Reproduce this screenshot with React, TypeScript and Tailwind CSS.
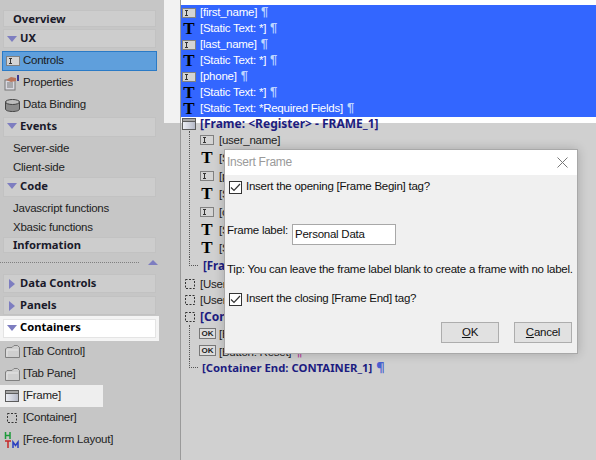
import { ReactNode } from 'react';

const BOLD_FONT = 'font-["Noto_Sans",sans-serif] font-bold';
const BODY_TEXT = 'text-[11.5px] tracking-[-0.25px]';

// Small toolbox glyphs from the builder's tree
const InputIcon = () => (
  <svg width="14" height="10" viewBox="0 0 14 10" className="shrink-0">
    <rect x="0.5" y="0.5" width="13" height="9" fill="#d4d4d4" stroke="#808080" />
    <path d="M3 2.500h3M3 7.500h3M4.500 2.500v5" stroke="#333" fill="none" />
  </svg>
);

const TextIcon = () => (
  <span className='w-[14px] shrink-0 text-center font-["Liberation_Serif",serif] text-[17px] leading-[14px] font-bold tracking-normal text-black'>
    T
  </span>
);

const FrameIcon = () => (
  <svg width="14" height="12" viewBox="0 0 14 12" className="shrink-0">
    <defs>
      <linearGradient id="frame-body" x1="0" x2="1" y1="0" y2="0">
        <stop offset="0" stopColor="#eef0f6" />
        <stop offset="1" stopColor="#b4b8c6" />
      </linearGradient>
    </defs>
    <rect x="0.5" y="0.5" width="13" height="11" fill="url(#frame-body)" stroke="#5c5c5c" />
    <rect x="1" y="1" width="12" height="2" fill="#a6a6a6" />
    <path d="M1 3.500h12" stroke="#5c5c5c" fill="none" />
  </svg>
);

const DashedIcon = () => (
  <svg width="12" height="12" viewBox="0 0 12 12" className="shrink-0">
    <rect x="1.500" y="1.500" width="9" height="9" fill="none" stroke="#333" strokeDasharray="2 1.500" />
  </svg>
);

const FolderIcon = () => (
  <svg width="15" height="13" viewBox="0 0 15 13" className="shrink-0">
    <path d="M.5 12.500V4L2 2.500h5L9 .5h3.500L14.500 2.500v10z" fill="#cfcfcf" stroke="#808080" />
    <path d="M2 11.500V5h11" stroke="#e6e6e6" fill="none" />
  </svg>
);

const HtmIcon = () => (
  <svg width="16" height="16" viewBox="0 0 16 16" className="shrink-0">
    <path d="M1.500 0v7M6 0v7M1.500 3.500H6" stroke="#1d9a3a" strokeWidth="1.500" fill="none" />
    <path d="M1 9h6M4 9v7" stroke="#c62828" strokeWidth="1.500" fill="none" />
    <path d="M9 16v-6l2.500 3.500L14 10v6" stroke="#2a3fc0" strokeWidth="1.500" fill="none" />
  </svg>
);

const OkIcon = () => (
  <span className='flex h-[11px] w-[17px] shrink-0 items-center justify-center border border-[#777] bg-[#dcdcdc] font-["Liberation_Sans",sans-serif] text-[8px] leading-none font-bold tracking-normal text-[#222]'>
    OK
  </span>
);

const PropertiesIcon = () => (
  <svg width="16" height="16" viewBox="0 0 16 16" className="shrink-0">
    <rect x="1" y="5" width="10" height="10" fill="#d8d8e0" stroke="#777" />
    <path d="M3 8h6M3 10h6M3 12h6" stroke="#777" fill="none" />
    <path d="M2 5l5-3 5 1v3l-5 1z" fill="#b9745a" />
    <rect x="13" y="0" width="2" height="6" fill="#3a3a90" />
  </svg>
);

const DatabaseIcon = () => (
  <svg width="15" height="13" viewBox="0 0 15 13" className="shrink-0">
    <path d="M.5 3v7c0 1.500 3 2.500 7 2.500s7-1 7-2.500V3z" fill="#8c8c8c" stroke="#444" />
    <ellipse cx="7.500" cy="3" rx="7" ry="2.500" fill="#bdbdbd" stroke="#444" />
  </svg>
);

const Arrow = ({ open }: { open: boolean }) => (
  <span className="flex w-[10px] shrink-0 justify-center">
    {open ? (
      <svg width="10" height="6" viewBox="0 0 10 6">
        <path d="M0 0h10L5 6z" fill="#7d7dc0" />
      </svg>
    ) : (
      <svg width="6" height="10" viewBox="0 0 6 10">
        <path d="M0 0v10l6-5z" fill="#7d7dc0" />
      </svg>
    )}
  </span>
);

const SectionBar = ({
  label,
  arrow,
  className = '',
}: {
  label: string;
  arrow?: 'open' | 'closed';
  className?: string;
}) => (
  <div
    className={`ml-[3px] flex w-[153px] items-center gap-[3px] border border-[#c2c2c2] bg-[#cdcdcd] pl-[3px] text-[11.2px] text-[#1a1a2a] ${BOLD_FONT} ${className}`}
  >
    {arrow ? <Arrow open={arrow === 'open'} /> : <span className="w-[3px]" />}
    <span>{label}</span>
  </div>
);

const SideItem = ({ icon, label, className = '' }: { icon?: ReactNode; label: string; className?: string }) => (
  <div className={`flex items-center text-[#222] ${BODY_TEXT} ${className}`}>
    {icon ? <span className="flex w-[23px] justify-center pl-[1px]">{icon}</span> : <span className="w-[13px]" />}
    <span>{label}</span>
  </div>
);

const Pilcrow = ({ selected }: { selected?: boolean }) => (
  <span className={`ml-[4px] text-[13px] font-bold ${selected ? 'text-[#bcd4ff]' : 'text-[#4a5fd0]'}`}>¶</span>
);

const SelectedRow = ({ icon, label }: { icon: ReactNode; label: string }) => (
  <div className={`flex h-[16px] items-center gap-[4px] text-white ${BODY_TEXT}`}>
    {icon}
    <span className="pb-[2px]">
      {label}
      <Pilcrow selected />
    </span>
  </div>
);

const TreeRow = ({ icon, label, className = 'h-[18px]' }: { icon: ReactNode; label: ReactNode; className?: string }) => (
  <div className={`flex items-center gap-[5px] text-[#222] ${BODY_TEXT} ${className}`}>
    {icon}
    <span className="pt-[2px]">{label}</span>
  </div>
);

// L shaped dotted corner that closes a nested branch of the tree
const BranchEnd = () => <span className="mb-[9px] h-[9px] w-[9px] shrink-0 border-b border-l border-dotted border-[#555]" />;

const CheckRow = ({ label, className = '' }: { label: string; className?: string }) => (
  <div className={`ml-[2px] flex items-center gap-[4px] ${className}`}>
    <span className="flex h-[13px] w-[13px] items-center justify-center border border-[#333] bg-white">
      <svg width="11" height="9" viewBox="0 0 11 9">
        <path d="M1 4.500l3 3 6-6.500" stroke="#333" strokeWidth="1.200" fill="none" />
      </svg>
    </span>
    <span>{label}</span>
  </div>
);

const InsertFrameDialog = () => (
  <div className={`absolute top-[149px] left-[224px] flex h-[205px] w-[354px] flex-col border border-[#a8a8a8] bg-[#f0f0f0] text-[#111] shadow-[0_0_10px_rgba(0,0,0,0.2)] ${BODY_TEXT}`}>
    <div className="flex h-[25px] shrink-0 items-center justify-between bg-white pr-[9px] pl-[2px] text-[12px] text-[#9a9a9a]">
      <span className="pb-[2px]">Insert Frame</span>
      <svg width="11" height="11" viewBox="0 0 11 11">
        <path d="M.5.5l10 10M10.500.5l-10 10" stroke="#777" fill="none" />
      </svg>
    </div>
    <div className="flex flex-1 flex-col pl-[2px]">
      <CheckRow label="Insert the opening [Frame Begin] tag?" className="mt-[5px] h-[14px]" />
      <div className="mt-[30px] flex h-[21px] items-center">
        <span className="-mt-[7px] w-[65px] whitespace-nowrap">Frame label:</span>
        <div className="flex h-[21px] w-[104px] items-center border border-[#a8a8a8] bg-white pl-[2px]">Personal Data</div>
      </div>
      <div className="mt-[16px] h-[16px] whitespace-nowrap">Tip: You can leave the frame label blank to create a frame with no label.</div>
      <CheckRow label="Insert the closing [Frame End] tag?" className="mt-[15px] h-[14px]" />
      <div className="mt-[16px] flex justify-end gap-[15px] pr-[5px]">
        <button className="h-[21px] w-[58px] border border-[#adadad] bg-[#e1e1e1]">
          <span className="underline">O</span>K
        </button>
        <button className="h-[21px] w-[58px] border border-[#adadad] bg-[#e1e1e1]">
          <span className="underline">C</span>ancel
        </button>
      </div>
    </div>
  </div>
);

export default function App() {
  return (
    <div className='relative flex h-[460px] w-[596px] overflow-hidden bg-[#c8c8c8] font-["Liberation_Sans",sans-serif]'>
      {/* left toolbox */}
      <aside className="relative flex h-full w-[181px] shrink-0 flex-col border-r border-[#9a9a9a] bg-[#c6c6c6] pt-[10px]">
        <div className="absolute top-0 left-[164px] h-[123px] w-[16px] bg-[#f2f2f2]" />
        <SectionBar label="Overview" className="h-[17px] pt-[2px]" />
        <SectionBar label="UX" arrow="open" className="mt-[2px] h-[19px]" />
        <div className={`mt-[3px] ml-[2px] flex h-[20px] w-[155px] items-center border border-[#2a7ac6] bg-[#5f9fdc] text-[#1a1a1a] ${BODY_TEXT}`}>
          <span className="flex w-[20px] justify-center">
            <InputIcon />
          </span>
          <span>Controls</span>
        </div>
        <SideItem icon={<PropertiesIcon />} label="Properties" className="h-[22px] pt-[2px]" />
        <SideItem icon={<DatabaseIcon />} label="Data Binding" className="h-[22px] pt-[2px]" />
        <SectionBar label="Events" arrow="open" className="mt-[2px] h-[20px] pb-[2px]" />
        <SideItem label="Server-side" className="mt-[1px] h-[20px] pt-[2px]" />
        <SideItem label="Client-side" className="h-[19px]" />
        <SectionBar label="Code" arrow="open" className="h-[20px] pb-[2px]" />
        <SideItem label="Javascript functions" className="mt-[1px] h-[20px] pt-[2px]" />
        <SideItem label="Xbasic functions" className="h-[19px]" />
        <SectionBar label="Information" className="h-[16px]" />
        <div className="mt-[5px] flex h-[8px] items-center">
          <div className="h-0 w-[139px] border-t border-dotted border-[#808080]" />
          <svg width="10" height="5" viewBox="0 0 10 5" className="ml-[9px]">
            <path d="M0 5h10L5 0z" fill="#7d7dc0" />
          </svg>
        </div>
        <SectionBar label="Data Controls" arrow="closed" className="mt-[8px] h-[19px]" />
        <SectionBar label="Panels" arrow="closed" className="mt-[3px] h-[19px]" />
        <div className="mt-[1px] flex h-[25px] w-[159px] shrink-0 items-center bg-[#f4f4f4]">
          <SectionBar label="Containers" arrow="open" className="h-[19px] pb-[2px] !border-[#e4e4e4] !bg-white !text-black" />
        </div>
        <SideItem icon={<FolderIcon />} label="[Tab Control]" className="h-[21px]" />
        <SideItem icon={<FolderIcon />} label="[Tab Pane]" className="h-[22px] pt-[2px]" />
        <SideItem icon={<FrameIcon />} label="[Frame]" className="mt-[1px] h-[22px] w-[103px] bg-[#eeeeee]" />
        <SideItem icon={<DashedIcon />} label="[Container]" className="h-[22px]" />
        <SideItem icon={<HtmIcon />} label="[Free-form Layout]" className="h-[22px]" />
      </aside>

      {/* canvas tree */}
      <main className="flex flex-1 flex-col bg-[#d0d0d0]">
        <div className="bg-white pt-[5px]">
          <div className="bg-[#3366ff] pl-[1px]">
            <SelectedRow icon={<InputIcon />} label="[first_name]" />
            <SelectedRow icon={<TextIcon />} label="[Static Text: *]" />
            <SelectedRow icon={<InputIcon />} label="[last_name]" />
            <SelectedRow icon={<TextIcon />} label="[Static Text: *]" />
            <SelectedRow icon={<InputIcon />} label="[phone]" />
            <SelectedRow icon={<TextIcon />} label="[Static Text: *]" />
            <SelectedRow icon={<TextIcon />} label="[Static Text: *Required Fields]" />
          </div>
        </div>
        <div className="flex flex-col pl-[1px]">
          <div className={`-ml-[1px] flex h-[14px] items-center gap-[4px] bg-[linear-gradient(#ffffff,#ffffff_6px,#d0d0d0_6px)] pl-[1px] text-[12px] text-[#1c1c80] ${BOLD_FONT}`}>
            <FrameIcon />
            <span>[Frame: &lt;Register&gt; - FRAME_1]</span>
          </div>
          <div className="ml-[7px] flex flex-col border-l border-dotted border-[#555] pl-[10px]">
            <TreeRow icon={<InputIcon />} label="[user_name]" />
            <TreeRow icon={<TextIcon />} label="[S" />
            <TreeRow icon={<InputIcon />} label="[p" />
            <TreeRow icon={<TextIcon />} label="[S" />
            <TreeRow icon={<InputIcon />} label="[c" />
            <TreeRow icon={<TextIcon />} label="[S" />
            <TreeRow icon={<TextIcon />} label="[S" />
          </div>
          <div className={`ml-[7px] flex h-[18px] items-center gap-[5px] text-[11.5px] text-[#1c1c80] ${BOLD_FONT}`}>
            <BranchEnd />
            <span>[Fra</span>
          </div>
          <TreeRow icon={<DashedIcon />} label="[User" className="mt-[1px] h-[16px] pl-[2px] !gap-[4px]" />
          <TreeRow icon={<DashedIcon />} label="[User" className="h-[16px] pl-[2px] !gap-[4px]" />
          <div className={`flex h-[17px] items-center gap-[4px] pl-[2px] text-[12px] text-[#1c1c80] ${BOLD_FONT}`}>
            <DashedIcon />
            <span>[Con</span>
          </div>
          <div className="ml-[7px] flex flex-col border-l border-dotted border-[#555] pl-[9px]">
            <TreeRow icon={<OkIcon />} label="[B" className="h-[17px] !gap-[3px]" />
            <TreeRow
              icon={<OkIcon />}
              label={
                <>
                  [Button: Reset]
                  <span className="ml-[4px] text-[13px] font-bold text-[#b03a9a]">¶</span>
                </>
              }
              className="h-[17px] !gap-[3px]"
            />
          </div>
          <div className={`ml-[7px] flex h-[18px] items-center gap-[4px] text-[11.3px] text-[#1c1c80] ${BOLD_FONT}`}>
            <BranchEnd />
            <span>[Container End: CONTAINER_1]</span>
            <span className="text-[13px] text-[#4a5fd0]">¶</span>
          </div>
        </div>
      </main>

      <InsertFrameDialog />
    </div>
  );
}
